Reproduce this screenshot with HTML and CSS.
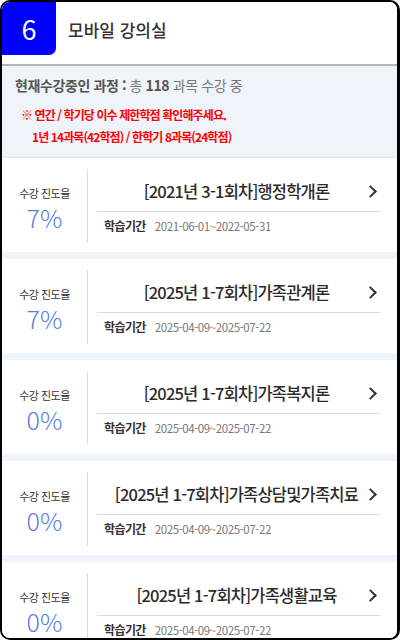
FILE: index.html
```html
<!DOCTYPE html>
<html lang="ko">
<head>
    <meta charset="UTF-8">
    <meta name="viewport" content="width=device-width, initial-scale=1.0">
    <title>모바일 강의실</title>
    <link rel="stylesheet" href="styles.css">
</head>
<body>

<div class="frame">
    <div class="header">
        <div class="badge">6</div>
        <div class="page-title">모바일 강의실</div>
    </div>

    <div class="summary">
        <p class="summary-count">
            <b>현재수강중인 과정 :</b> 총 <b>118</b> 과목 수강 중
        </p>
        <p class="notice">※ 연간 / 학기당 이수 제한학점 확인해주세요.</p>
        <p class="notice indent">1년 14과목(42학점) / 한학기 8과목(24학점)</p>
    </div>

    <div class="course-list">
        <div class="course">
            <div class="progress">
                <span class="progress-label">수강 진도율</span>
                <span class="progress-value">7%</span>
            </div>
            <div class="course-info">
                <div class="course-head">
                    <span class="course-title">[2021년 3-1회차]행정학개론</span>
                    <span class="chevron"></span>
                </div>
                <div class="course-period">
                    <b>학습기간</b>
                    <span>2021-06-01~2022-05-31</span>
                </div>
            </div>
        </div>

        <div class="course">
            <div class="progress">
                <span class="progress-label">수강 진도율</span>
                <span class="progress-value">7%</span>
            </div>
            <div class="course-info">
                <div class="course-head">
                    <span class="course-title">[2025년 1-7회차]가족관계론</span>
                    <span class="chevron"></span>
                </div>
                <div class="course-period">
                    <b>학습기간</b>
                    <span>2025-04-09~2025-07-22</span>
                </div>
            </div>
        </div>

        <div class="course">
            <div class="progress">
                <span class="progress-label">수강 진도율</span>
                <span class="progress-value">0%</span>
            </div>
            <div class="course-info">
                <div class="course-head">
                    <span class="course-title">[2025년 1-7회차]가족복지론</span>
                    <span class="chevron"></span>
                </div>
                <div class="course-period">
                    <b>학습기간</b>
                    <span>2025-04-09~2025-07-22</span>
                </div>
            </div>
        </div>

        <div class="course">
            <div class="progress">
                <span class="progress-label">수강 진도율</span>
                <span class="progress-value">0%</span>
            </div>
            <div class="course-info">
                <div class="course-head">
                    <span class="course-title">[2025년 1-7회차]가족상담및가족치료</span>
                    <span class="chevron"></span>
                </div>
                <div class="course-period">
                    <b>학습기간</b>
                    <span>2025-04-09~2025-07-22</span>
                </div>
            </div>
        </div>

        <div class="course">
            <div class="progress">
                <span class="progress-label">수강 진도율</span>
                <span class="progress-value">0%</span>
            </div>
            <div class="course-info">
                <div class="course-head">
                    <span class="course-title">[2025년 1-7회차]가족생활교육</span>
                    <span class="chevron"></span>
                </div>
                <div class="course-period">
                    <b>학습기간</b>
                    <span>2025-04-09~2025-07-22</span>
                </div>
            </div>
        </div>
    </div>
</div>

</body>
</html>
```

FILE: styles.css
```css
* {
    box-sizing: border-box;
}

body {
    margin: 0;
    background-color: #fff;
    font-family: "Noto Sans CJK KR", "Noto Sans", sans-serif;
}

.frame {
    width: 400px;
    height: 640px;
    border: 2px solid #000;
    border-right-width: 3px;
    border-radius: 10px;
    overflow: hidden;
    background-color: #eff3fa;
}

.header {
    display: flex;
    align-items: flex-start;
    height: 64px;
    background-color: #fff;
    border-bottom: 2px solid #b4b4b4;
}

.badge {
    width: 54px;
    height: 53px;
    background-color: #0000ff;
    color: #fff;
    font-size: 27px;
    line-height: 53px;
    text-align: center;
    border-radius: 0 0 7px 0;
}

.page-title {
    margin-left: 12px;
    line-height: 56px;
    font-size: 17px;
    font-weight: 500;
    color: #333;
}

.summary {
    padding: 9px 0 9px 13px;
    border-bottom: 1px solid #dfe5ef;
}

.summary p {
    margin: 0;
}

.summary-count {
    font-size: 14px;
    letter-spacing: -0.4px;
    line-height: 20px;
    color: #777;
    margin-bottom: 9px !important;
}

.summary-count b {
    color: #555;
}

.notice {
    font-size: 12px;
    font-weight: bold;
    letter-spacing: -0.9px;
    line-height: 22px;
    color: #ff0000;
    padding-left: 6px;
}

.notice.indent {
    padding-left: 17px;
}

.course-list {
    display: flex;
    flex-direction: column;
    gap: 7px;
}

.course {
    display: flex;
    height: 94px;
    flex-shrink: 0;
    background-color: #fff;
}

.progress {
    width: 86px;
    margin: 11px 0 9px;
    border-right: 1px solid #dcdcdc;
    display: flex;
    flex-direction: column;
    align-items: center;
    padding-top: 16px;
}

.progress-label {
    font-size: 11px;
    letter-spacing: -0.5px;
    color: #333;
    line-height: 16px;
}

.progress-value {
    margin-top: 2px;
    font-size: 25px;
    font-weight: 300;
    color: #5a7fe0;
    line-height: 28px;
}

.course-info {
    flex: 1;
    padding: 0 17px 0 9px;
}

.course-head {
    display: flex;
    align-items: center;
    height: 54px;
    padding-top: 12px;
    border-bottom: 1px solid #dcdcdc;
}

.course-title {
    flex: 1;
    text-align: center;
    padding-left: 12px;
    font-size: 16.5px;
    font-weight: 500;
    letter-spacing: -0.8px;
    color: #2b2b2b;
    white-space: nowrap;
}

.chevron {
    width: 16px;
    height: 16px;
    position: relative;
}

.chevron::after {
    content: "";
    position: absolute;
    left: 2px;
    top: 4px;
    width: 7px;
    height: 7px;
    border-top: 2px solid #333;
    border-right: 2px solid #333;
    transform: rotate(45deg);
}

.course-period {
    display: flex;
    align-items: center;
    gap: 9px;
    height: 27px;
    padding-left: 7px;
}

.course-period b {
    font-size: 12px;
    letter-spacing: -0.6px;
    color: #333;
}

.course-period span {
    font-size: 11.5px;
    letter-spacing: -0.4px;
    color: #777;
}
```
